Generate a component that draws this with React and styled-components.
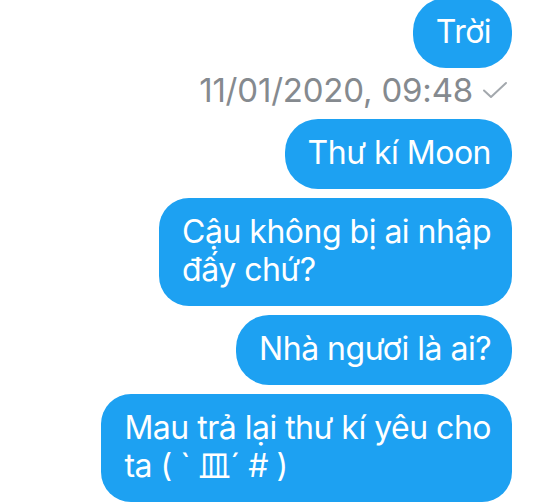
import React from "react";
import styled, { createGlobalStyle } from "styled-components";

const Global = createGlobalStyle`
  html, body { margin: 0; padding: 0; background: #ffffff; }
  body { font-family: Inter, "Noto Sans", "Noto Sans CJK JP", sans-serif; overflow: hidden; }
`;

const Thread = styled.div`
  width: 542px;
  height: 504px;
  box-sizing: border-box;
  padding: 0 30px 0 0;
  display: flex;
  flex-direction: column;
  align-items: flex-end;
  gap: 9px;
  overflow: hidden;
`;

const Bubble = styled.div`
  box-sizing: border-box;
  width: fit-content;
  background: #1da1f2;
  color: #ffffff;
  font-size: 32px;
  letter-spacing: -0.5px;
  line-height: 38px;
  padding: 15px 21px 17px 23px;
  border-radius: ${(p) => (p.$multi ? "30px" : "33px")};
  white-space: nowrap;
  margin-top: ${(p) => p.$offset || 0}px;
`;

const Meta = styled.div`
  display: flex;
  align-items: center;
  gap: 9px;
  margin: -6px 4px 1px 0;
  color: #858a8f;
  font-size: 33px;
  letter-spacing: -0.2px;
  line-height: 38px;
`;

const Check = () => (
  <svg width="26" height="18" viewBox="0 0 26 18" fill="none">
    <path d="M2 9.5 L9 16 L24 2" stroke="#a3a8ad" strokeWidth="2" strokeLinecap="round" strokeLinejoin="round" />
  </svg>
);

const messages = [
  { lines: ["Trời"], offset: -2 },
  { meta: "11/01/2020, 09:48" },
  { lines: ["Thư kí Moon"] },
  { lines: ["Cậu không bị ai nhập", "đấy chứ?"] },
  { lines: ["Nhà ngươi là ai?"] },
  { lines: ["Mau trả lại thư kí yêu cho", "ta ( ` 皿´ # )"] },
];

export default function App() {
  return (
    <>
      <Global />
      <Thread>
        {messages.map((m, i) =>
          m.meta ? (
            <Meta key={i}>
              <span>{m.meta}</span>
              <Check />
            </Meta>
          ) : (
            <Bubble key={i} $multi={m.lines.length > 1} $offset={m.offset}>
              {m.lines.map((l, j) => (
                <React.Fragment key={j}>
                  {j > 0 && <br />}
                  {l}
                </React.Fragment>
              ))}
            </Bubble>
          )
        )}
      </Thread>
    </>
  );
}
